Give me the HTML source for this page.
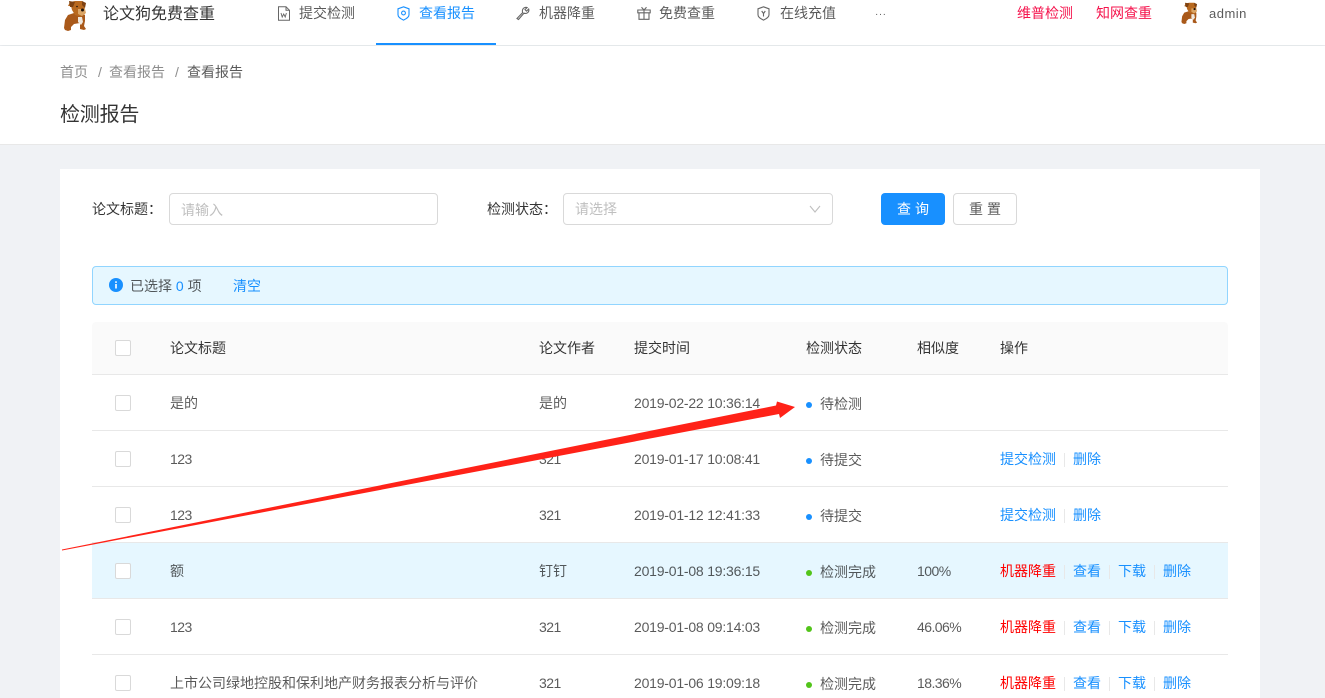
<!DOCTYPE html>
<html lang="zh">
<head>
<meta charset="utf-8">
<style>
html,body{margin:0;padding:0;width:1325px;height:698px;overflow:hidden;background:#f0f2f5}
body{position:relative;font:14px/20px "Liberation Sans","Noto Sans CJK SC",sans-serif;color:rgba(0,0,0,.65)}
.a{position:absolute;white-space:nowrap}
.t{position:absolute;white-space:nowrap;height:20px;line-height:20px}
.b{background:#fff}
.l{color:#1890ff}
.red{color:#f00}
.h{color:rgba(0,0,0,.8)}
.g{color:rgba(0,0,0,.45)}
.d{letter-spacing:-.21px}
.n{letter-spacing:-.55px}
.cb{position:absolute;left:115px;width:14px;height:14px;border:1px solid #d9d9d9;border-radius:2px;background:#fff}
.line{position:absolute;left:92px;width:1136px;height:1px;background:#e8e8e8}
.dot{position:absolute;left:806px;width:6px;height:6px;border-radius:50%;background:#1890ff}
.dot.gr{background:#52c41a}
.sep{position:absolute;width:1px;height:14px;background:#e8e8e8}
svg{position:absolute;overflow:visible}
</style>
</head>
<body>
<!-- header -->
<div class="a b" style="left:0;top:0;width:1325px;height:45px;box-shadow:0 1px 4px rgba(0,21,41,.08)"></div>
<svg style="left:62px;top:0" width="26" height="31" viewBox="0 0 26 31">
<path d="M12 13l11 2 0 6-1 5 2 3-2 1-4-1 0-6-6 1-3 3 0 3-3 1-3-1-1-2 1-8 3-5z" fill="#a9591a"/>
<path d="M8 2l5-1 7 0 3 2-1 2 1 5 0 4-4 3-6-2-3-5-1-4-3 0z" fill="#b8691f"/>
<path d="M7 1l6 1-2 5-3 0z" fill="#7e4212"/>
<path d="M20 1l4 2-1 5-3-3z" fill="#7e4212"/>
<path d="M16 9l7 0 1 4-4 3-4-2z" fill="#dba565"/>
<path d="M16 17l4 0 1 5-2 3-3-3z" fill="#efe7dc"/>
<circle cx="20.500" cy="10" r="1.500" fill="#1c1008"/>
<circle cx="15" cy="6.500" r=".8" fill="#1c1008"/>
</svg>
<div class="t" style="left:103px;top:4px;font-size:16px;line-height:22px;height:22px;color:rgba(0,0,0,.8)">论文狗免费查重</div>

<svg style="left:277px;top:6px" width="14" height="15" viewBox="0 0 14 15" fill="none" stroke="#666" stroke-width="1"><path d="M1.500 .8h7.500l3.500 3.500v9.900h-11z"/><path d="M9 .8v3.500h3.500"/><path d="M4 7l1.200 4 1.500-3 1.500 3 1.200-4" stroke-width=".9"/></svg>
<div class="t" style="left:299px;top:3px">提交检测</div>

<div class="a" style="left:376px;top:43px;width:120px;height:2px;background:#1890ff"></div>
<svg style="left:397px;top:6px" width="13" height="15" viewBox="0 0 13 15" fill="none" stroke="#1890ff" stroke-width="1.100"><path d="M6.500 .8l5.500 2v6c0 2.300-2.500 4-5.500 5.300C3.500 12.800 1 11.100 1 8.800v-6z"/><circle cx="6.500" cy="7" r="1.900"/></svg>
<div class="t l" style="left:419px;top:3px">查看报告</div>

<svg style="left:516px;top:6px" width="14" height="14" viewBox="0 0 14 14" fill="none" stroke="#666" stroke-width="1.100"><path d="M1 12.500l5.600-5.900c-.7-2 0-4.200 2-5 .9-.4 1.800-.4 2.500-.1L9 3.600l1.500 1.500 2.200-2.100c.4 1.200.1 2.600-.9 3.500-1 1-2.500 1.200-3.800.6L2.500 13.500z"/></svg>
<div class="t" style="left:539px;top:3px">机器降重</div>

<svg style="left:637px;top:6px" width="14" height="14" viewBox="0 0 14 14" fill="none" stroke="#666" stroke-width="1.100"><path d="M.8 4h12.400v2.800H.8zM2 6.800v6.500h10V6.800M7 4v9.300M7 4L4.500 1.200M7 4l2.500-2.800"/></svg>
<div class="t" style="left:659px;top:3px">免费查重</div>

<svg style="left:757px;top:6px" width="13" height="15" viewBox="0 0 13 15" fill="none" stroke="#666" stroke-width="1.100"><path d="M6.500 .8l5.500 2v6c0 2.300-2.500 4-5.500 5.300C3.500 12.800 1 11.100 1 8.800v-6z"/><path d="M4.700 5l1.800 2.500L8.300 5M6.500 7.500V10.500"/></svg>
<div class="t" style="left:780px;top:3px">在线充值</div>
<div class="t" style="left:875px;top:5px;font-size:10px;letter-spacing:.5px">···</div>

<div class="t" style="left:1017px;top:3px;color:#f5144d">维普检测</div>
<div class="t" style="left:1096px;top:3px;color:#f5144d">知网查重</div>
<svg style="left:1180px;top:2px" width="18.500" height="22" viewBox="0 0 26 31">
<path d="M12 13l11 2 0 6-1 5 2 3-2 1-4-1 0-6-6 1-3 3 0 3-3 1-3-1-1-2 1-8 3-5z" fill="#a9591a"/>
<path d="M8 2l5-1 7 0 3 2-1 2 1 5 0 4-4 3-6-2-3-5-1-4-3 0z" fill="#b8691f"/>
<path d="M7 1l6 1-2 5-3 0z" fill="#7e4212"/>
<path d="M20 1l4 2-1 5-3-3z" fill="#7e4212"/>
<path d="M16 9l7 0 1 4-4 3-4-2z" fill="#dba565"/>
<path d="M16 17l4 0 1 5-2 3-3-3z" fill="#efe7dc"/>
<circle cx="20.500" cy="10" r="1.500" fill="#1c1008"/>
</svg>
<div class="t" style="left:1209px;top:4px;font-size:13px;letter-spacing:.5px">admin</div>

<!-- page head -->
<div class="a b" style="left:0;top:46px;width:1325px;height:98px;border-bottom:1px solid #e8e8e8"></div>
<div class="t g" style="left:60px;top:62px">首页</div>
<div class="t g" style="left:98px;top:62px">/</div>
<div class="t g" style="left:109px;top:62px">查看报告</div>
<div class="t g" style="left:175px;top:62px">/</div>
<div class="t" style="left:187px;top:62px">查看报告</div>
<div class="t h" style="left:60px;top:103px;font-size:20px;line-height:24px;height:24px;letter-spacing:-.2px">检测报告</div>

<!-- card -->
<div class="a b" style="left:60px;top:169px;width:1200px;height:529px"></div>

<div class="t h" style="left:92px;top:199px">论文标题：</div>
<div class="a" style="left:169px;top:193px;width:267px;height:30px;border:1px solid #d9d9d9;border-radius:4px;background:#fff"></div>
<div class="t" style="left:181px;top:200px;color:#bfbfbf">请输入</div>

<div class="t h" style="left:487px;top:199px">检测状态：</div>
<div class="a" style="left:563px;top:193px;width:268px;height:30px;border:1px solid #d9d9d9;border-radius:4px;background:#fff"></div>
<div class="t" style="left:575px;top:199px;color:#bfbfbf">请选择</div>
<svg style="left:809px;top:204px" width="12" height="10" viewBox="0 0 12 10" fill="none" stroke="#bfbfbf" stroke-width="1.100"><path d="M1 2l5 6 5-6"/></svg>

<div class="a" style="left:881px;top:193px;width:64px;height:32px;border-radius:4px;background:#1890ff;color:#fff;text-align:center;line-height:32px;letter-spacing:4px;text-indent:4px">查询</div>
<div class="a" style="left:953px;top:193px;width:62px;height:30px;border:1px solid #d9d9d9;border-radius:4px;background:#fff;text-align:center;line-height:30px;letter-spacing:4px;text-indent:4px">重置</div>

<!-- alert -->
<div class="a" style="left:92px;top:266px;width:1134px;height:37px;border:1px solid #91d5ff;border-radius:4px;background:#e6f7ff"></div>
<svg style="left:109px;top:278px" width="14" height="14" viewBox="0 0 14 14"><circle cx="7" cy="7" r="7" fill="#1890ff"/><rect x="6.200" y="6" width="1.600" height="4.500" fill="#fff"/><rect x="6.200" y="3.300" width="1.600" height="1.600" fill="#fff"/></svg>
<div class="t" style="left:130px;top:276px">已选择 <span class="l">0</span> 项</div>
<div class="t l" style="left:233px;top:276px">清空</div>

<!-- table head -->
<div class="a" style="left:92px;top:322px;width:1136px;height:52px;background:#fafafa;border-radius:4px 4px 0 0"></div>
<div class="cb" style="top:340px"></div>
<div class="t h" style="left:170px;top:338px">论文标题</div>
<div class="t h" style="left:539px;top:338px">论文作者</div>
<div class="t h" style="left:634px;top:338px">提交时间</div>
<div class="t h" style="left:806px;top:338px">检测状态</div>
<div class="t h" style="left:917px;top:338px">相似度</div>
<div class="t h" style="left:1000px;top:338px">操作</div>
<div class="line" style="top:374px"></div>

<!-- highlighted row -->
<div class="a" style="left:92px;top:543px;width:1136px;height:55px;background:#e6f7ff"></div>

<div class="line" style="top:430px"></div>
<div class="line" style="top:486px"></div>
<div class="line" style="top:542px"></div>
<div class="line" style="top:598px"></div>
<div class="line" style="top:654px"></div>

<!-- row 1 -->
<div class="cb" style="top:395px"></div>
<div class="t" style="left:170px;top:393px">是的</div>
<div class="t" style="left:539px;top:393px">是的</div>
<div class="t d" style="left:634px;top:393px">2019-02-22 10:36:14</div>
<div class="dot" style="top:402px"></div>
<div class="t" style="left:820px;top:394px">待检测</div>

<!-- row 2 -->
<div class="cb" style="top:451px"></div>
<div class="t n" style="left:170px;top:449px">123</div>
<div class="t n" style="left:539px;top:449px">321</div>
<div class="t d" style="left:634px;top:449px">2019-01-17 10:08:41</div>
<div class="dot" style="top:458px"></div>
<div class="t" style="left:820px;top:450px">待提交</div>
<div class="t l" style="left:1000px;top:449px">提交检测</div>
<div class="sep" style="left:1064px;top:453px"></div>
<div class="t l" style="left:1073px;top:449px">删除</div>

<!-- row 3 -->
<div class="cb" style="top:507px"></div>
<div class="t n" style="left:170px;top:505px">123</div>
<div class="t n" style="left:539px;top:505px">321</div>
<div class="t d" style="left:634px;top:505px">2019-01-12 12:41:33</div>
<div class="dot" style="top:514px"></div>
<div class="t" style="left:820px;top:506px">待提交</div>
<div class="t l" style="left:1000px;top:505px">提交检测</div>
<div class="sep" style="left:1064px;top:509px"></div>
<div class="t l" style="left:1073px;top:505px">删除</div>

<!-- row 4 -->
<div class="cb" style="top:563px"></div>
<div class="t" style="left:170px;top:561px">额</div>
<div class="t" style="left:539px;top:561px">钉钉</div>
<div class="t d" style="left:634px;top:561px">2019-01-08 19:36:15</div>
<div class="dot gr" style="top:570px"></div>
<div class="t" style="left:820px;top:562px">检测完成</div>
<div class="t n" style="left:917px;top:561px">100%</div>
<div class="t red" style="left:1000px;top:561px">机器降重</div>
<div class="sep" style="left:1064px;top:565px"></div>
<div class="t l" style="left:1073px;top:561px">查看</div>
<div class="sep" style="left:1109px;top:565px"></div>
<div class="t l" style="left:1118px;top:561px">下载</div>
<div class="sep" style="left:1154px;top:565px"></div>
<div class="t l" style="left:1163px;top:561px">删除</div>

<!-- row 5 -->
<div class="cb" style="top:619px"></div>
<div class="t n" style="left:170px;top:617px">123</div>
<div class="t n" style="left:539px;top:617px">321</div>
<div class="t d" style="left:634px;top:617px">2019-01-08 09:14:03</div>
<div class="dot gr" style="top:626px"></div>
<div class="t" style="left:820px;top:618px">检测完成</div>
<div class="t n" style="left:917px;top:617px">46.06%</div>
<div class="t red" style="left:1000px;top:617px">机器降重</div>
<div class="sep" style="left:1064px;top:621px"></div>
<div class="t l" style="left:1073px;top:617px">查看</div>
<div class="sep" style="left:1109px;top:621px"></div>
<div class="t l" style="left:1118px;top:617px">下载</div>
<div class="sep" style="left:1154px;top:621px"></div>
<div class="t l" style="left:1163px;top:617px">删除</div>

<!-- row 6 -->
<div class="cb" style="top:675px"></div>
<div class="t" style="left:170px;top:673px">上市公司绿地控股和保利地产财务报表分析与评价</div>
<div class="t n" style="left:539px;top:673px">321</div>
<div class="t d" style="left:634px;top:673px">2019-01-06 19:09:18</div>
<div class="dot gr" style="top:682px"></div>
<div class="t" style="left:820px;top:674px">检测完成</div>
<div class="t n" style="left:917px;top:673px">18.36%</div>
<div class="t red" style="left:1000px;top:673px">机器降重</div>
<div class="sep" style="left:1064px;top:677px"></div>
<div class="t l" style="left:1073px;top:673px">查看</div>
<div class="sep" style="left:1109px;top:677px"></div>
<div class="t l" style="left:1118px;top:673px">下载</div>
<div class="sep" style="left:1154px;top:677px"></div>
<div class="t l" style="left:1163px;top:673px">删除</div>

<!-- annotation arrow -->
<svg style="left:0;top:0" width="1325" height="698"><polygon points="62,549.500 776,405.500 777,401.500 795,407 780,418 779,414 62,550.500" fill="#ff2218"/></svg>
</body>
</html>
